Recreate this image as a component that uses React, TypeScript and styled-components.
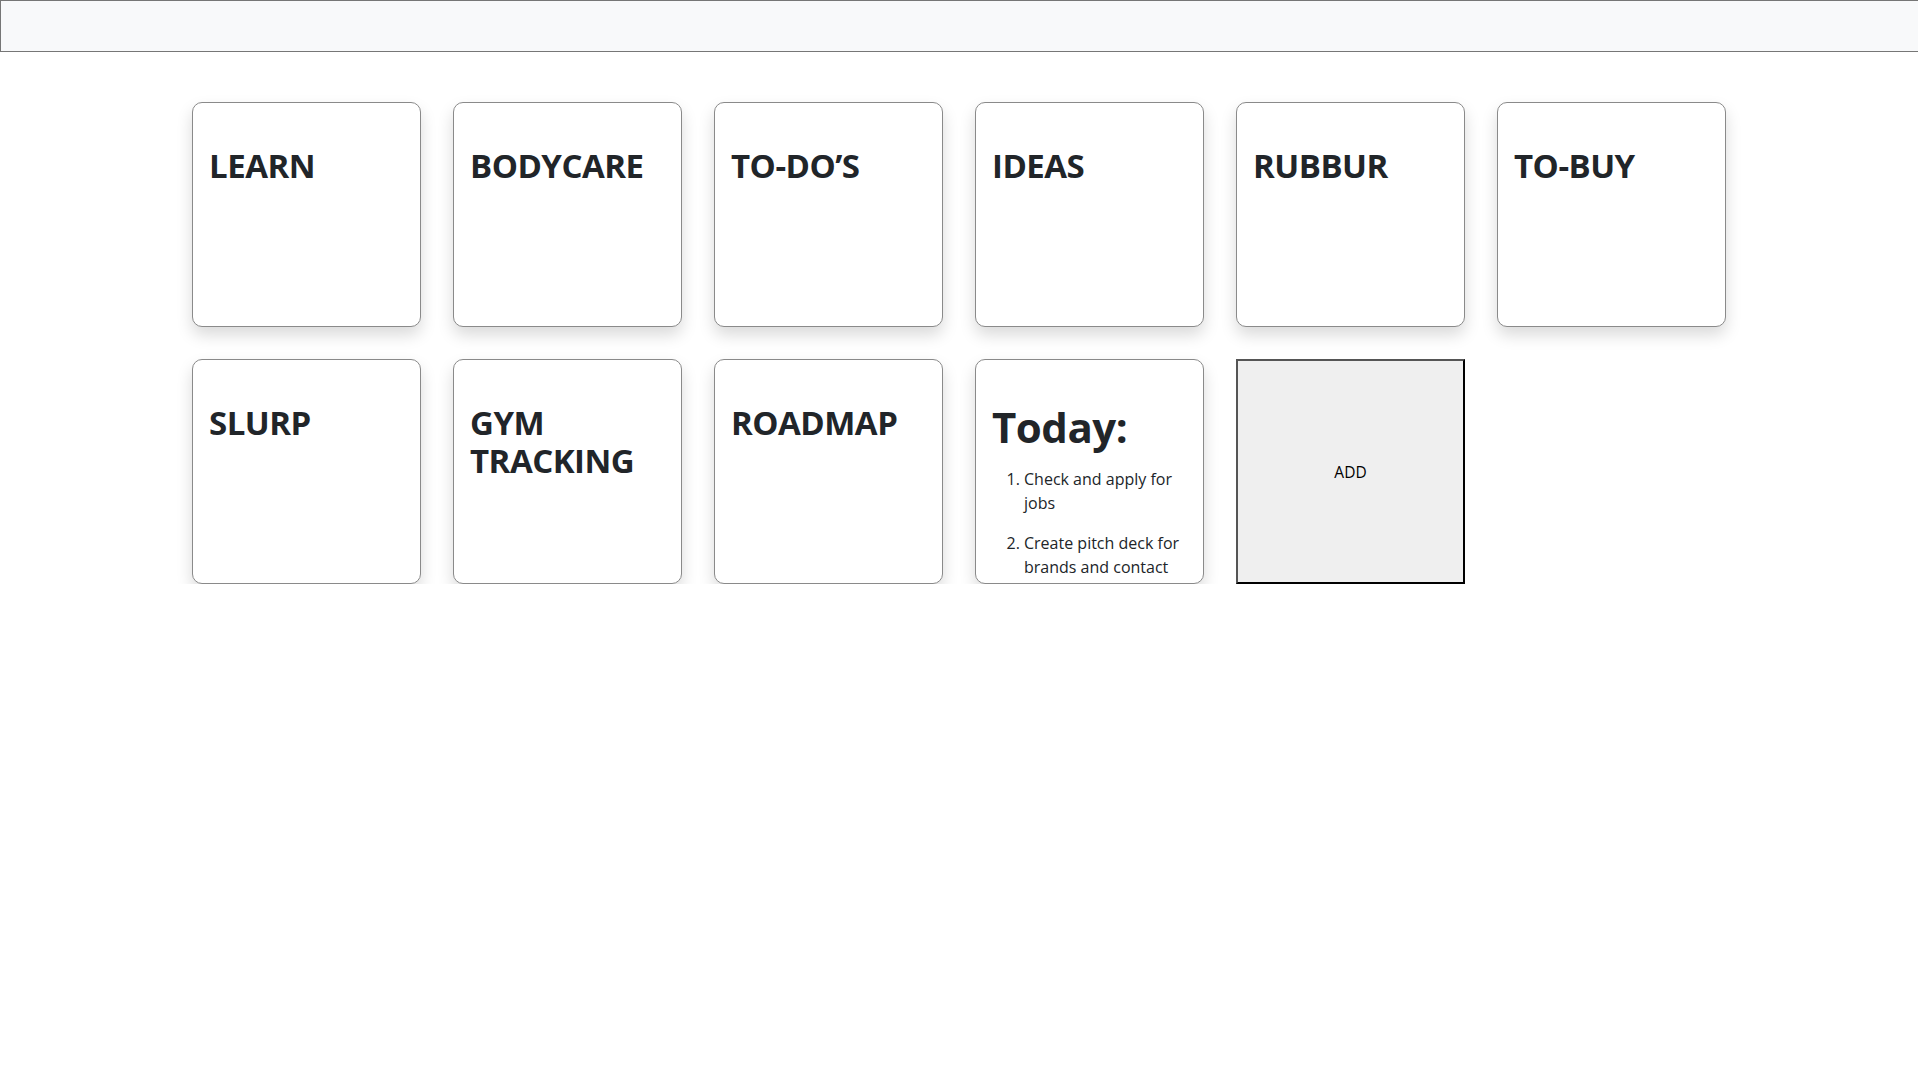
import React from "react";
import styled, { createGlobalStyle } from "styled-components";

const GlobalStyle = createGlobalStyle`
  html, body {
    margin: 0;
    padding: 0;
    background: #ffffff;
    font-family: "Open Sans", "Liberation Sans", sans-serif;
    color: #212529;
  }
  * { box-sizing: border-box; }
`;

const TopBar = styled.div`
  height: 52px;
  width: 100%;
  background: #f8f9fa;
  border: 1px solid #767676;
  border-right: none;
`;

const Board = styled.div`
  display: grid;
  grid-template-columns: repeat(6, 229px);
  grid-auto-rows: 225px;
  column-gap: 32px;
  row-gap: 32px;
  justify-content: center;
  margin-top: 50px;
`;

const Card = styled.div<{ $top?: number }>`
  background: #ffffff;
  border: 1px solid #8a8a8a;
  border-radius: 10px;
  box-shadow: 0 8px 16px rgba(0, 0, 0, 0.15);
  padding: ${(p) => p.$top ?? 44}px 16px 16px;
  overflow: hidden;
`;

const Title = styled.h2`
  margin: 0;
  font-size: 33px;
  line-height: 38px;
  letter-spacing: -0.5px;
  font-weight: 700;
  color: #212529;
`;

const BigTitle = styled.h1`
  margin: 0 0 14px;
  font-size: 42px;
  line-height: 52px;
  letter-spacing: -0.5px;
  font-weight: 700;
  color: #212529;
`;

const List = styled.ol`
  margin: 0;
  padding-left: 32px;
`;

const Item = styled.li`
  font-size: 16px;
  line-height: 24px;
  margin-bottom: 16px;
  color: #212529;
`;

const AddButton = styled.button`
  background: #efefef;
  border-style: solid;
  border-width: 2px;
  border-color: #555555 #000000 #000000 #555555;
  border-radius: 0;
  font-family: "Open Sans", "Liberation Sans", sans-serif;
  font-size: 15.5px;
  color: #000000;
  display: flex;
  align-items: center;
  justify-content: center;
  padding: 0;
  cursor: pointer;
`;

const topics = [
  "LEARN",
  "BODYCARE",
  "TO-DO’S",
  "IDEAS",
  "RUBBUR",
  "TO-BUY",
  "SLURP",
  "GYM TRACKING",
  "ROADMAP",
];

export default function App() {
  return (
    <>
      <GlobalStyle />
      <TopBar />
      <Board>
        {topics.map((t) => (
          <Card key={t}>
            <Title>{t}</Title>
          </Card>
        ))}
        <Card $top={41}>
          <BigTitle>Today:</BigTitle>
          <List>
            <Item>Check and apply for jobs</Item>
            <Item>Create pitch deck for brands and contact</Item>
          </List>
        </Card>
        <AddButton>ADD</AddButton>
      </Board>
    </>
  );
}
